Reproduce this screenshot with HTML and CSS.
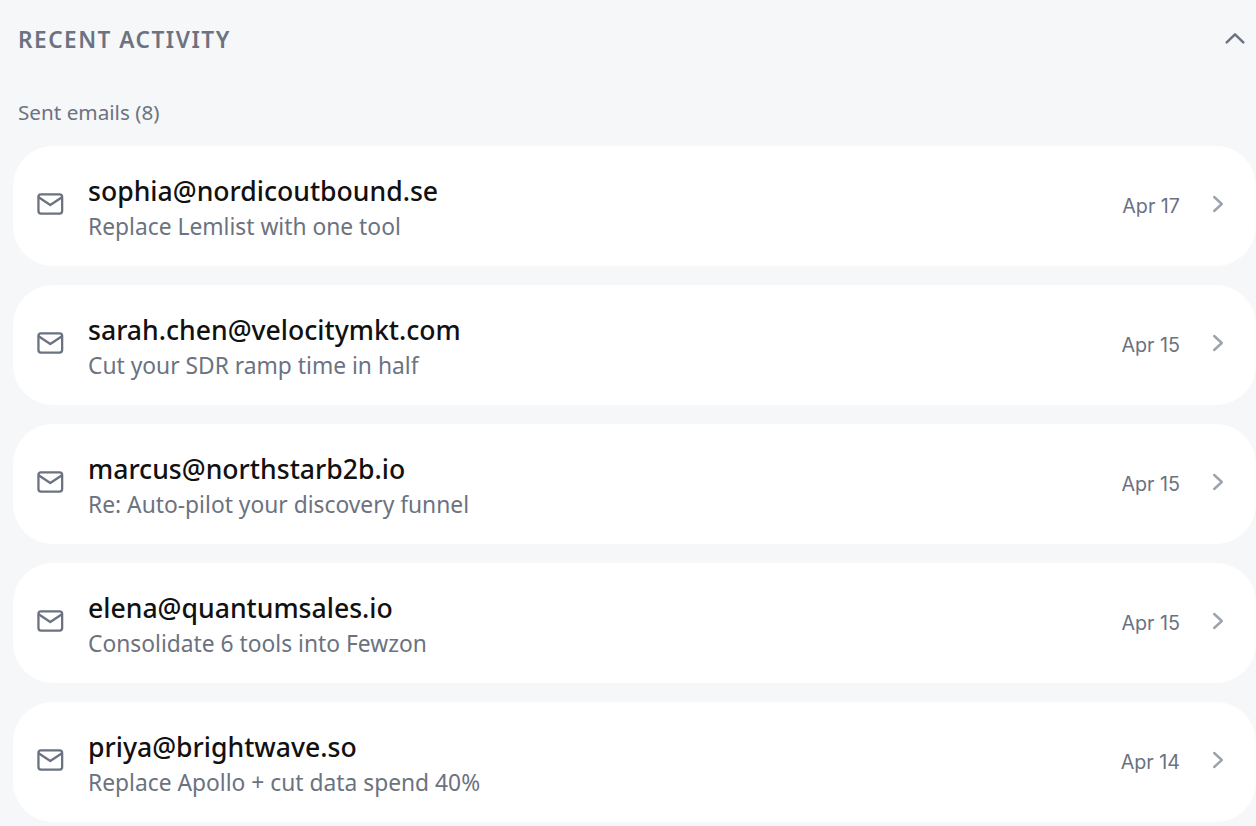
FILE: index.html
```html
<!DOCTYPE html>
<html lang="en">
<head>
  <meta charset="UTF-8">
  <meta name="viewport" content="width=device-width, initial-scale=1.0">
  <title>Recent Activity</title>
  <link rel="stylesheet" href="styles.css">
</head>
<body>
  <div class="container">
    <div class="section-header">
      <div class="section-title">RECENT ACTIVITY</div>
      <svg class="collapse-icon" width="24" height="24" viewBox="0 0 24 24" fill="none" stroke="currentColor" stroke-width="2.5" stroke-linecap="round" stroke-linejoin="round"><path d="M3.7 15.4L12 7.4l8.3 8"/></svg>
    </div>
    <div class="section-sub">Sent emails (8)</div>
    <div class="activity-list">
      <div class="activity-card">
        <svg class="mail-icon" width="28" height="28" viewBox="0 0 28 28" fill="none" stroke="currentColor" stroke-width="2.3" stroke-linecap="round" stroke-linejoin="round"><rect x="2.45" y="4.45" width="23.7" height="19.1" rx="2.5"/><path d="M3 7.5L14.3 15 25.6 7.5"/></svg>
        <div class="activity-text">
          <div class="activity-email">sophia@nordicoutbound.se</div>
          <div class="activity-subject">Replace Lemlist with one tool</div>
        </div>
        <div class="activity-date">Apr 17</div>
        <svg class="chevron" width="20" height="20" viewBox="0 0 20 20" fill="none" stroke="currentColor" stroke-width="2.4" stroke-linecap="round" stroke-linejoin="round"><path d="M6.2 3l7.6 7-7.6 7"/></svg>
      </div>
      <div class="activity-card">
        <svg class="mail-icon" width="28" height="28" viewBox="0 0 28 28" fill="none" stroke="currentColor" stroke-width="2.3" stroke-linecap="round" stroke-linejoin="round"><rect x="2.45" y="4.45" width="23.7" height="19.1" rx="2.5"/><path d="M3 7.5L14.3 15 25.6 7.5"/></svg>
        <div class="activity-text">
          <div class="activity-email">sarah.chen@velocitymkt.com</div>
          <div class="activity-subject">Cut your SDR ramp time in half</div>
        </div>
        <div class="activity-date">Apr 15</div>
        <svg class="chevron" width="20" height="20" viewBox="0 0 20 20" fill="none" stroke="currentColor" stroke-width="2.4" stroke-linecap="round" stroke-linejoin="round"><path d="M6.2 3l7.6 7-7.6 7"/></svg>
      </div>
      <div class="activity-card">
        <svg class="mail-icon" width="28" height="28" viewBox="0 0 28 28" fill="none" stroke="currentColor" stroke-width="2.3" stroke-linecap="round" stroke-linejoin="round"><rect x="2.45" y="4.45" width="23.7" height="19.1" rx="2.5"/><path d="M3 7.5L14.3 15 25.6 7.5"/></svg>
        <div class="activity-text">
          <div class="activity-email">marcus@northstarb2b.io</div>
          <div class="activity-subject">Re: Auto-pilot your discovery funnel</div>
        </div>
        <div class="activity-date">Apr 15</div>
        <svg class="chevron" width="20" height="20" viewBox="0 0 20 20" fill="none" stroke="currentColor" stroke-width="2.4" stroke-linecap="round" stroke-linejoin="round"><path d="M6.2 3l7.6 7-7.6 7"/></svg>
      </div>
      <div class="activity-card">
        <svg class="mail-icon" width="28" height="28" viewBox="0 0 28 28" fill="none" stroke="currentColor" stroke-width="2.3" stroke-linecap="round" stroke-linejoin="round"><rect x="2.45" y="4.45" width="23.7" height="19.1" rx="2.5"/><path d="M3 7.5L14.3 15 25.6 7.5"/></svg>
        <div class="activity-text">
          <div class="activity-email">elena@quantumsales.io</div>
          <div class="activity-subject">Consolidate 6 tools into Fewzon</div>
        </div>
        <div class="activity-date">Apr 15</div>
        <svg class="chevron" width="20" height="20" viewBox="0 0 20 20" fill="none" stroke="currentColor" stroke-width="2.4" stroke-linecap="round" stroke-linejoin="round"><path d="M6.2 3l7.6 7-7.6 7"/></svg>
      </div>
      <div class="activity-card">
        <svg class="mail-icon" width="28" height="28" viewBox="0 0 28 28" fill="none" stroke="currentColor" stroke-width="2.3" stroke-linecap="round" stroke-linejoin="round"><rect x="2.45" y="4.45" width="23.7" height="19.1" rx="2.5"/><path d="M3 7.5L14.3 15 25.6 7.5"/></svg>
        <div class="activity-text">
          <div class="activity-email">priya@brightwave.so</div>
          <div class="activity-subject">Replace Apollo + cut data spend 40%</div>
        </div>
        <div class="activity-date">Apr 14</div>
        <svg class="chevron" width="20" height="20" viewBox="0 0 20 20" fill="none" stroke="currentColor" stroke-width="2.4" stroke-linecap="round" stroke-linejoin="round"><path d="M6.2 3l7.6 7-7.6 7"/></svg>
      </div>
    </div>
  </div>
</body>
</html>
```

FILE: styles.css
```css
html, body {
  height: 100%;
}

body {
  margin: 0;
  font-family: 'Noto Sans', sans-serif;
  background-color: #f6f7f9;
  overflow: hidden;
}

.container {
  padding: 22px 0 0 13px;
}

.section-header {
  display: flex;
  justify-content: space-between;
  align-items: center;
  height: 34px;
  padding: 0 9px 0 5px;
}

.section-title {
  font-size: 22.6px;
  font-weight: 600;
  letter-spacing: 1.5px;
  color: #6b7280;
}

.collapse-icon {
  color: #6b7280;
}

.section-sub {
  margin: 41px 0 19px 5px;
  height: 30px;
  line-height: 30px;
  font-size: 20.7px;
  color: #6b7280;
}

.activity-list {
  display: flex;
  flex-direction: column;
  gap: 19px;
}

.activity-card {
  display: flex;
  align-items: center;
  height: 120px;
  padding: 0 28px 0 23px;
  background-color: white;
  border-radius: 40px;
}

.mail-icon {
  flex-shrink: 0;
  color: #6b7280;
  margin: 0 24px 4px 0;
}

.activity-text {
  flex: 1;
  min-width: 0;
  padding-top: 5px;
}

.activity-email {
  font-size: 26.6px;
  font-weight: 500;
  line-height: 36px;
  color: #111111;
}

.activity-subject {
  font-size: 22.8px;
  line-height: 36px;
  color: #6b7280;
}

.activity-date {
  font-family: Inter, sans-serif;
  font-size: 19.7px;
  color: #6b7280;
  margin-right: 28px;
}

.chevron {
  flex-shrink: 0;
  color: #9ca3af;
  margin-bottom: 4px;
}
```
